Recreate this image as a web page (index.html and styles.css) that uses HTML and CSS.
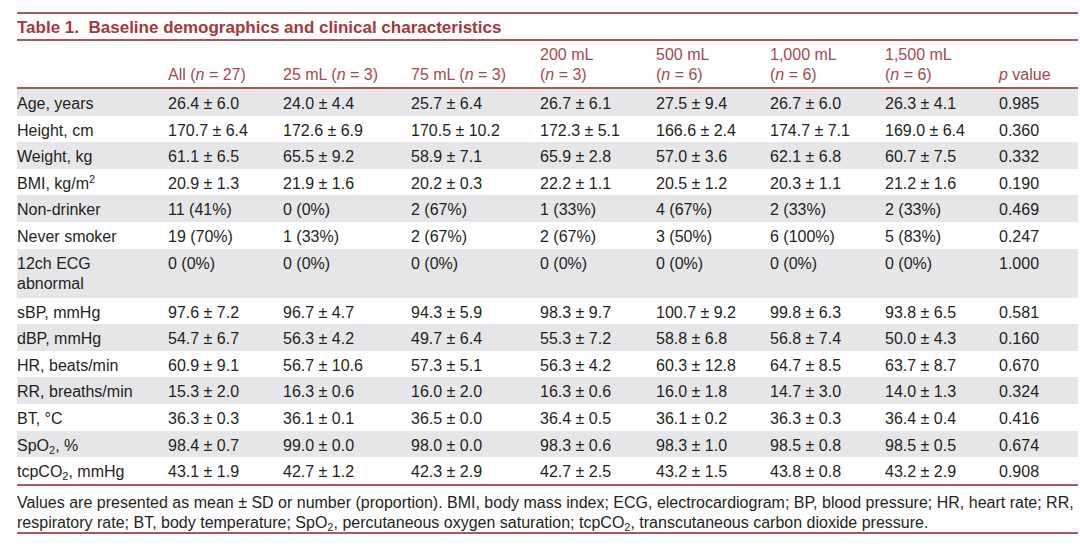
FILE: index.html
```html
<!DOCTYPE html>
<html lang="en">
<head>
<meta charset="utf-8">
<title>Table 1. Baseline demographics and clinical characteristics</title>
<link rel="stylesheet" href="styles.css">
</head>
<body>
<div class="wrap">
  <div class="title">Table 1.&nbsp; Baseline demographics and clinical characteristics</div>
  <table class="tbl">
    <colgroup>
      <col class="c-label"><col class="c-all"><col class="c-25"><col class="c-75"><col class="c-200"><col class="c-500"><col class="c-1000"><col class="c-1500"><col class="c-p">
    </colgroup>
    <thead>
      <tr>
        <th></th>
        <th>All (<i>n</i> = 27)</th>
        <th>25 mL (<i>n</i> = 3)</th>
        <th>75 mL (<i>n</i> = 3)</th>
        <th>200 mL<br>(<i>n</i> = 3)</th>
        <th>500 mL<br>(<i>n</i> = 6)</th>
        <th>1,000 mL<br>(<i>n</i> = 6)</th>
        <th>1,500 mL<br>(<i>n</i> = 6)</th>
        <th><i>p</i> value</th>
      </tr>
    </thead>
    <tbody>
      <tr class="shade"><td>Age, years</td><td>26.4 ± 6.0</td><td>24.0 ± 4.4</td><td>25.7 ± 6.4</td><td>26.7 ± 6.1</td><td>27.5 ± 9.4</td><td>26.7 ± 6.0</td><td>26.3 ± 4.1</td><td>0.985</td></tr>
      <tr><td>Height, cm</td><td>170.7 ± 6.4</td><td>172.6 ± 6.9</td><td>170.5 ± 10.2</td><td>172.3 ± 5.1</td><td>166.6 ± 2.4</td><td>174.7 ± 7.1</td><td>169.0 ± 6.4</td><td>0.360</td></tr>
      <tr class="shade"><td>Weight, kg</td><td>61.1 ± 6.5</td><td>65.5 ± 9.2</td><td>58.9 ± 7.1</td><td>65.9 ± 2.8</td><td>57.0 ± 3.6</td><td>62.1 ± 6.8</td><td>60.7 ± 7.5</td><td>0.332</td></tr>
      <tr><td>BMI, kg/m<sup>2</sup></td><td>20.9 ± 1.3</td><td>21.9 ± 1.6</td><td>20.2 ± 0.3</td><td>22.2 ± 1.1</td><td>20.5 ± 1.2</td><td>20.3 ± 1.1</td><td>21.2 ± 1.6</td><td>0.190</td></tr>
      <tr class="shade"><td>Non-drinker</td><td>11 (41%)</td><td>0 (0%)</td><td>2 (67%)</td><td>1 (33%)</td><td>4 (67%)</td><td>2 (33%)</td><td>2 (33%)</td><td>0.469</td></tr>
      <tr><td>Never smoker</td><td>19 (70%)</td><td>1 (33%)</td><td>2 (67%)</td><td>2 (67%)</td><td>3 (50%)</td><td>6 (100%)</td><td>5 (83%)</td><td>0.247</td></tr>
      <tr class="shade tall"><td>12ch ECG<br>abnormal</td><td>0 (0%)</td><td>0 (0%)</td><td>0 (0%)</td><td>0 (0%)</td><td>0 (0%)</td><td>0 (0%)</td><td>0 (0%)</td><td>1.000</td></tr>
      <tr><td>sBP, mmHg</td><td>97.6 ± 7.2</td><td>96.7 ± 4.7</td><td>94.3 ± 5.9</td><td>98.3 ± 9.7</td><td>100.7 ± 9.2</td><td>99.8 ± 6.3</td><td>93.8 ± 6.5</td><td>0.581</td></tr>
      <tr class="shade"><td>dBP, mmHg</td><td>54.7 ± 6.7</td><td>56.3 ± 4.2</td><td>49.7 ± 6.4</td><td>55.3 ± 7.2</td><td>58.8 ± 6.8</td><td>56.8 ± 7.4</td><td>50.0 ± 4.3</td><td>0.160</td></tr>
      <tr><td>HR, beats/min</td><td>60.9 ± 9.1</td><td>56.7 ± 10.6</td><td>57.3 ± 5.1</td><td>56.3 ± 4.2</td><td>60.3 ± 12.8</td><td>64.7 ± 8.5</td><td>63.7 ± 8.7</td><td>0.670</td></tr>
      <tr class="shade"><td>RR, breaths/min</td><td>15.3 ± 2.0</td><td>16.3 ± 0.6</td><td>16.0 ± 2.0</td><td>16.3 ± 0.6</td><td>16.0 ± 1.8</td><td>14.7 ± 3.0</td><td>14.0 ± 1.3</td><td>0.324</td></tr>
      <tr><td>BT, °C</td><td>36.3 ± 0.3</td><td>36.1 ± 0.1</td><td>36.5 ± 0.0</td><td>36.4 ± 0.5</td><td>36.1 ± 0.2</td><td>36.3 ± 0.3</td><td>36.4 ± 0.4</td><td>0.416</td></tr>
      <tr class="shade"><td>SpO<sub>2</sub>, %</td><td>98.4 ± 0.7</td><td>99.0 ± 0.0</td><td>98.0 ± 0.0</td><td>98.3 ± 0.6</td><td>98.3 ± 1.0</td><td>98.5 ± 0.8</td><td>98.5 ± 0.5</td><td>0.674</td></tr>
      <tr><td>tcpCO<sub>2</sub>, mmHg</td><td>43.1 ± 1.9</td><td>42.7 ± 1.2</td><td>42.3 ± 2.9</td><td>42.7 ± 2.5</td><td>43.2 ± 1.5</td><td>43.8 ± 0.8</td><td>43.2 ± 2.9</td><td>0.908</td></tr>
    </tbody>
  </table>
  <div class="foot">Values are presented as mean ± SD or number (proportion). BMI, body mass index; ECG, electrocardiogram; BP, blood pressure; HR, heart rate; RR, respiratory rate; BT, body temperature; SpO<sub>2</sub>, percutaneous oxygen saturation; tcpCO<sub>2</sub>, transcutaneous carbon dioxide pressure.</div>
</div>
</body>
</html>
```

FILE: styles.css
```css
html, body {
  margin: 0;
  padding: 0;
  background: #ffffff;
}

body {
  font-family: "Liberation Sans", Arial, sans-serif;
  font-size: 16px;
  color: #231f20;
}

.wrap {
  margin: 12px 0 0 17px;
  width: 1061px;
  border-top: 2px solid #a8585b;
}

.title {
  height: 25px;
  line-height: 27px;
  font-size: 17px;
  font-weight: bold;
  color: #a3383d;
  border-bottom: 2px solid #a8585b;
}

.tbl {
  width: 100%;
  border-collapse: collapse;
  table-layout: fixed;
}

.c-label { width: 151px; }
.c-all { width: 115px; }
.c-25 { width: 128px; }
.c-75 { width: 129px; }
.c-200 { width: 116px; }
.c-500 { width: 114px; }
.c-1000 { width: 115px; }
.c-1500 { width: 114px; }
.c-p { width: 79px; }

.tbl th {
  height: 43px;
  padding: 0 0 3px 0;
  vertical-align: bottom;
  text-align: left;
  font-weight: normal;
  line-height: 19.5px;
  color: #a24a4f;
  border-bottom: 2px solid #a8585b;
  white-space: nowrap;
}

.tbl td {
  padding: 5px 0 2px 0;
  line-height: 19.6px;
  text-align: left;
  vertical-align: top;
  white-space: nowrap;
}

.tbl tr.tall td {
  padding-top: 5px;
  padding-bottom: 4px;
  line-height: 20px;
}

.tbl tbody tr.shade {
  background-color: #e6e6e9;
}

.tbl tbody tr.shade td {
  background-color: #e6e6e9;
}

sub, sup {
  font-size: 11px;
  line-height: 1;
  vertical-align: baseline;
  position: relative;
}

sub { top: 3px; }
sup { top: -6px; }

.foot {
  padding: 7px 0 0 0;
  line-height: 20px;
  height: 39px;
  border-top: 2px solid #a8585b;
  border-bottom: 2px solid #a8585b;
}
```
